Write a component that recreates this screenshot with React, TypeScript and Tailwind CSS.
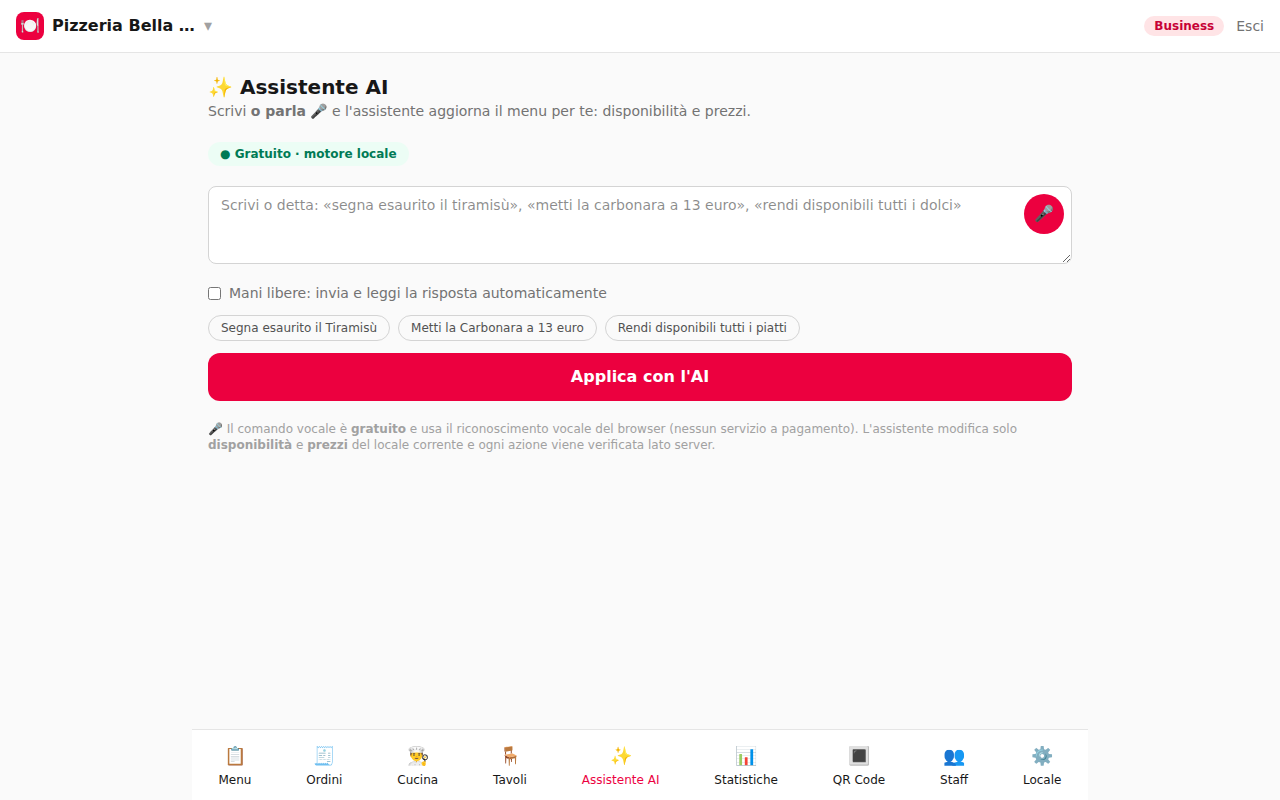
import { useState } from 'react';

const suggestions = ['Segna esaurito il Tiramisù', 'Metti la Carbonara a 13 euro', 'Rendi disponibili tutti i piatti'];

const navItems = [
  { icon: '📋', label: 'Menu' },
  { icon: '🧾', label: 'Ordini' },
  { icon: '👨‍🍳', label: 'Cucina' },
  { icon: '🪑', label: 'Tavoli' },
  { icon: '✨', label: 'Assistente AI', active: true },
  { icon: '📊', label: 'Statistiche' },
  { icon: '🔳', label: 'QR Code' },
  { icon: '👥', label: 'Staff' },
  { icon: '⚙️', label: 'Locale' },
];

function Header() {
  return (
    <header className="flex items-center justify-between border-b border-neutral-200 bg-white px-4 py-3">
      <button type="button" className="flex items-center gap-2">
        <span className="grid h-7 w-7 place-items-center rounded-lg bg-rose-600 text-base text-white">🍽️</span>
        <span className="min-w-36 text-left font-bold">Pizzeria Bella …</span>
        <span className="text-neutral-400">▾</span>
      </button>
      <div className="flex items-center gap-3">
        <span className="rounded-full bg-rose-100 px-2.5 py-0.5 text-xs font-semibold text-rose-700">Business</span>
        <button type="button" className="text-sm text-neutral-500">Esci</button>
      </div>
    </header>
  );
}

function BottomNav() {
  return (
    <nav className="fixed inset-x-0 bottom-0 mx-auto flex max-w-4xl justify-around gap-0.5 border-t border-neutral-200 bg-white py-3">
      {navItems.map((item) => (
        <a
          key={item.label}
          href="#"
          className={item.active ? 'flex flex-col items-center gap-0.5 px-2 text-xs text-rose-600' : 'flex flex-col items-center gap-0.5 px-2 text-xs'}
        >
          <span className="text-lg">{item.icon}</span>
          {item.label}
        </a>
      ))}
    </nav>
  );
}

export default function App() {
  const [text, setText] = useState('');

  return (
    <div className="min-h-screen bg-neutral-50 font-['DejaVu_Sans',sans-serif] text-neutral-900">
      <Header />
      <main className="mx-auto flex max-w-4xl flex-col gap-5 px-4 pt-5 pb-24">
        <div>
          <h1 className="text-xl font-bold">✨ Assistente AI</h1>
          <p className="text-sm text-neutral-500">
            Scrivi <b>o parla</b> 🎤 e l'assistente aggiorna il menu per te: disponibilità e prezzi.
          </p>
        </div>
        <div>
          <span className="inline-block rounded-full bg-emerald-50 px-3 py-1 text-xs font-semibold text-emerald-700">● Gratuito · motore locale</span>
        </div>
        <form className="flex flex-col gap-3" onSubmit={(e) => e.preventDefault()}>
          <div className="relative">
            <textarea
              aria-label="Comando per l'assistente"
              rows={3}
              value={text}
              onChange={(e) => setText(e.target.value)}
              placeholder="Scrivi o detta: «segna esaurito il tiramisù», «metti la carbonara a 13 euro», «rendi disponibili tutti i dolci»"
              className="inline-block w-full rounded-lg border border-neutral-300 bg-white py-2 pr-14 pl-3 align-baseline text-sm"
            />
            <button type="button" aria-label="Detta" className="absolute top-2 right-2 grid h-10 w-10 place-items-center rounded-full bg-rose-600 text-base text-white">
              🎤
            </button>
          </div>
          <label className="flex items-center gap-2 text-sm text-neutral-500">
            <input type="checkbox" />
            Mani libere: invia e leggi la risposta automaticamente
          </label>
          <div className="flex flex-wrap gap-2">
            {suggestions.map((s) => (
              <button key={s} type="button" onClick={() => setText(s)} className="rounded-full border border-neutral-300 px-3 py-1 text-xs text-neutral-600">
                {s}
              </button>
            ))}
          </div>
          <button type="submit" className="rounded-xl bg-rose-600 py-3 font-semibold text-white">Applica con l'AI</button>
        </form>
        <p className="text-xs text-neutral-400">
          🎤 Il comando vocale è <b>gratuito</b> e usa il riconoscimento vocale del browser (nessun servizio a pagamento). L'assistente
          modifica solo <b>disponibilità</b> e <b>prezzi</b> del locale corrente e ogni azione viene verificata lato server.
        </p>
      </main>
      <BottomNav />
    </div>
  );
}
